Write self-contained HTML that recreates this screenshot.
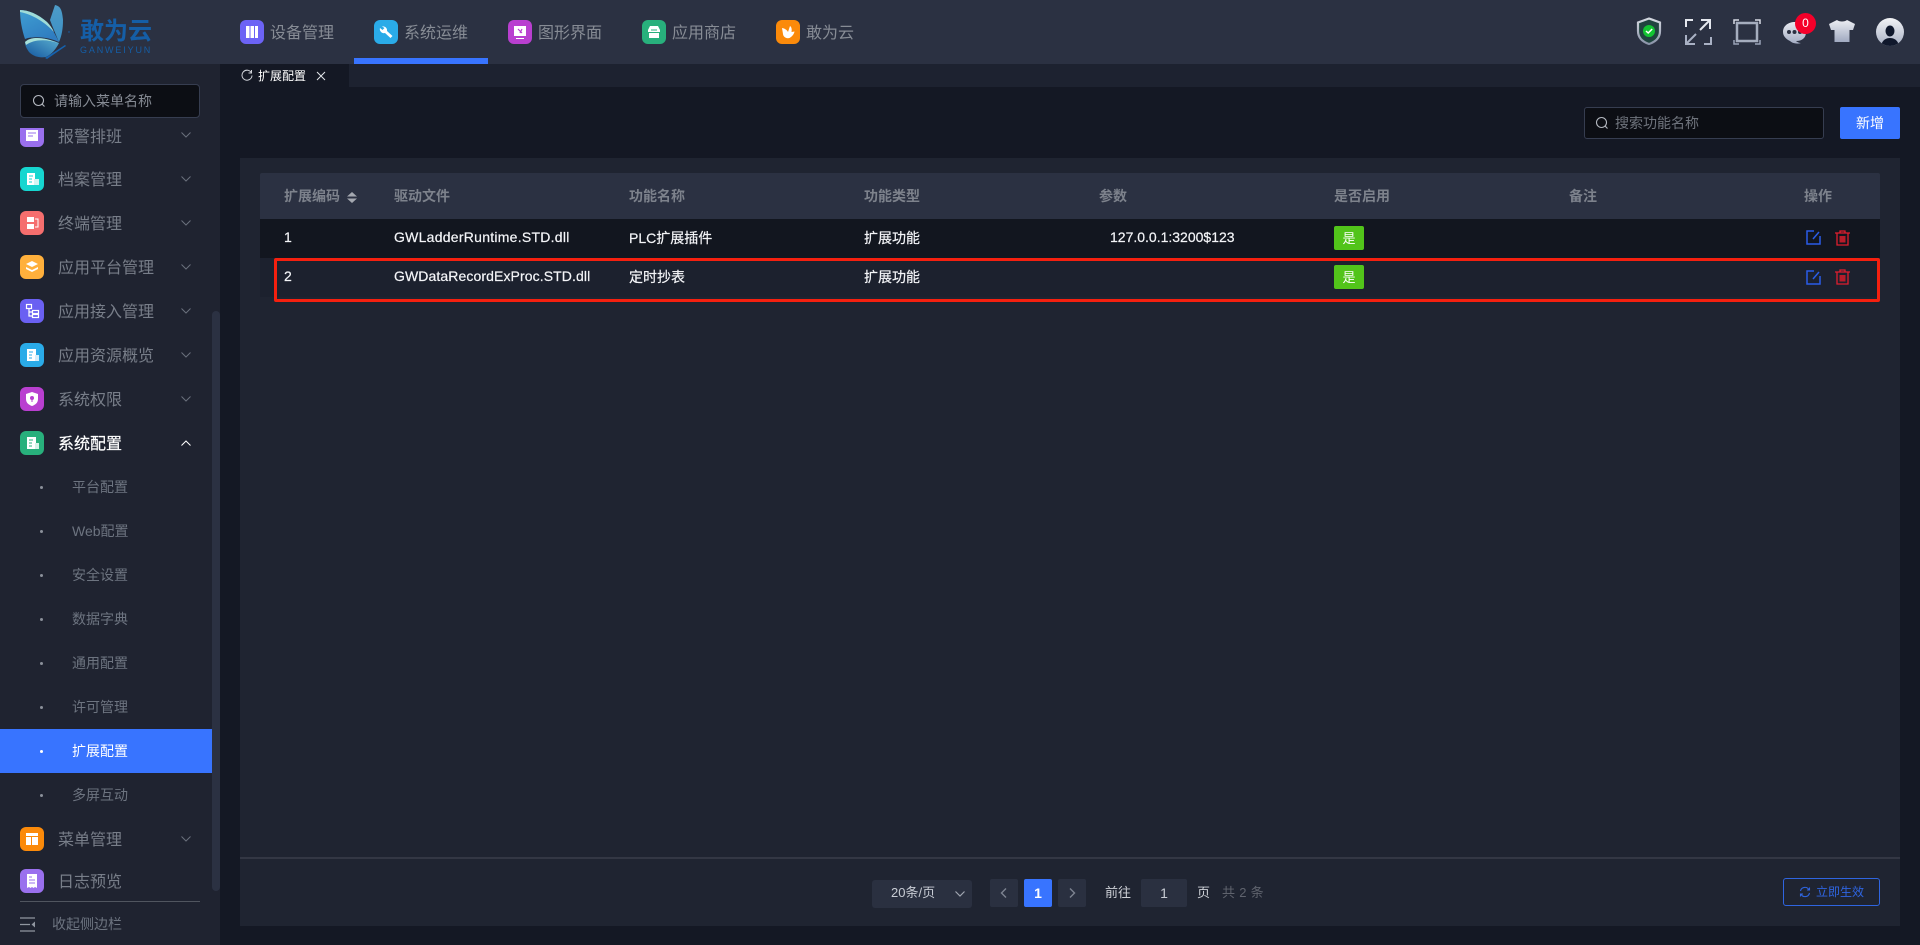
<!DOCTYPE html>
<html lang="zh"><head><meta charset="utf-8"><title>扩展配置</title>
<style>
*{box-sizing:border-box}
html,body{margin:0;padding:0;width:1920px;height:945px;overflow:hidden;background:#141824;font-family:"Liberation Sans","Noto Sans CJK SC",sans-serif}
.a{position:absolute;white-space:nowrap}
.ic{position:absolute;width:24px;height:24px;border-radius:6px}
.ic svg{position:absolute;left:0;top:0;width:24px;height:24px}
.nav{position:absolute;top:22px;height:24px;line-height:24px;font-size:16px;color:#878c95}
.m{position:absolute;left:58px;height:24px;line-height:24px;font-size:16px;color:#787e89;margin-top:2px}
.s{position:absolute;left:72px;height:24px;line-height:24px;font-size:14px;color:#6d7480}
.d{position:absolute;left:40px;width:3px;height:3px;border-radius:50%;background:#8b909a}
.ch{position:absolute;left:181px;width:10px;height:6px}
.th{position:absolute;top:184px;height:24px;line-height:24px;font-size:14px;font-weight:bold;color:#7d828c}
.td{position:absolute;height:24px;line-height:24px;font-size:14px;color:#f4f5f8;-webkit-text-stroke:.2px #f4f5f8}
.tag{position:absolute;left:1334px;width:30px;height:24px;line-height:26px;background:#52c41a;border-radius:2px;color:#fff;font-size:13px;text-align:center}
.pg{position:absolute;top:879px;width:28px;height:28px;background:#2a3040;border-radius:2px}
</style></head><body>
<!-- main panel -->
<div class="a" style="left:220px;top:64px;width:1700px;height:881px;background:#141824"></div>
<div class="a" style="left:0;top:64px;width:220px;height:881px;background:#1f2330"></div>
<div class="a" style="left:220px;top:64px;width:1700px;height:23px;background:#1d2230"></div>
<div class="a" style="left:220px;top:64px;width:129px;height:23px;background:#141824"></div>
<div class="a" style="left:0;top:0;width:1920px;height:64px;background:#2b3142"></div>

<!-- logo -->
<svg class="a" style="left:18px;top:3px" width="54" height="58" viewBox="18 3 54 58">
<defs><linearGradient id="g1" x1="0" y1="0" x2=".6" y2="1"><stop offset="0" stop-color="#3f9ed2"/><stop offset="1" stop-color="#2f7cc0"/></linearGradient>
<linearGradient id="g2" x1="1" y1="0" x2="0" y2="1"><stop offset="0" stop-color="#5bb0d0"/><stop offset="1" stop-color="#14569f"/></linearGradient>
<linearGradient id="g6" x1="0" y1="0" x2="0" y2="1"><stop offset="0" stop-color="#4d9cc8"/><stop offset="1" stop-color="#3c8fc4"/></linearGradient></defs>
<path d="M55 5C60 6 62 9 63 20C63 28 62 35 59 42C56 35 53 28 50 20Z" fill="url(#g6)"/>
<path d="M20 10C28 10 38 14 47 22C52 28 56 36 59 42C50 38 40 36 28 38L25 39C22 30 20 20 20 10Z" fill="url(#g1)"/>
<path d="M20 10C28 10 38 14 47 22C50 25 52 28 54 32C46 23 32 14 20 12Z" fill="#9fdcd8"/>
<path d="M25 42C30 37 42 36 59 43C56 49 52 54 46 57C40 58 34 57 29 52C27 49 25 46 25 42Z" fill="url(#g2)"/>
<path d="M25 42C31 36 44 37 58 43C47 39 34 39 26 45Z" fill="#a8e0d8"/>
<path d="M45 58L65 45L66 46L47 59Z" fill="#1563b0"/><circle cx="69" cy="32" r=".7" fill="#1563b0"/>
</svg>
<div class="a" style="left:80px;top:17px;height:30px;line-height:30px;font-size:24px;font-weight:bold;color:#155ea6">敢为云</div>
<div class="a" style="left:80px;top:46px;height:8px;line-height:8px;font-size:9px;color:#155ea6;letter-spacing:1.85px">GANWEIYUN</div>

<!-- top nav -->
<div class="ic" style="left:240px;top:20px;background:#6c63f5"><svg viewBox="0 0 24 24"><path d="M6 6h3.500v12H6zM10.500 6H14v12h-3.500zM15 6h3v12h-3z" fill="#fff"/></svg></div>
<div class="nav" style="left:270px">设备管理</div>
<div class="ic" style="left:374px;top:20px;background:#2aabe8"><svg viewBox="0 0 24 24"><path d="M8 6.500a4 4 0 0 1 5 4.500l5.500 5-2 2-5.500-5a4 4 0 0 1-5-5l2.500 2 2-2z" fill="#fff"/></svg></div>
<div class="nav" style="left:404px">系统运维</div>
<div class="a" style="left:354px;top:58px;width:134px;height:6px;background:#3874ff"></div>
<div class="ic" style="left:508px;top:20px;background:#b93fd0"><svg viewBox="0 0 24 24"><path d="M6 6h12v10H6z" fill="#fff"/><path d="M8 18h8v1H8z" fill="#fff"/><path d="M10 9l4 4M14 9l-2 4" stroke="#b93fd0" stroke-width="1.200" fill="none"/></svg></div>
<div class="nav" style="left:538px">图形界面</div>
<div class="ic" style="left:642px;top:20px;background:#28b07c"><svg viewBox="0 0 24 24"><path d="M8 6h8l2 4v2H6v-2z" fill="#fff"/><path d="M7 13h10v5H7z" fill="#fff"/><path d="M9 10h6" stroke="#28b07c"/></svg></div>
<div class="nav" style="left:672px">应用商店</div>
<div class="ic" style="left:776px;top:20px;background:#fb8a0a"><svg viewBox="0 0 24 24"><path d="M6 8c3 .5 5 2 6 4l2-6c1.500 1 2 3 1.500 6l3-.5c-.5 3-3 5.500-5 6.500-4 1-6.500-2-6.500-4z" fill="#fff"/></svg></div>
<div class="nav" style="left:806px">敢为云</div>

<!-- header right icons -->
<svg class="a" style="left:1635px;top:16px" width="28" height="30" viewBox="0 0 28 30">
<defs><linearGradient id="g7" x1="0" y1="0" x2="0" y2="1"><stop offset="0" stop-color="#d4d8e0"/><stop offset="1" stop-color="#8a93a8"/></linearGradient></defs>
<path d="M14 2.500L25 6.500V15C25 22 20 26 14 28C8 26 3 22 3 15V6.500Z" fill="#20443f" stroke="url(#g7)" stroke-width="2.200"/>
<circle cx="14" cy="15" r="6" fill="#12c532"/><path d="M11 15l2.200 2 4-4" stroke="#fff" stroke-width="1.500" fill="none"/></svg>
<svg class="a" style="left:1684px;top:18px" width="28" height="28" viewBox="0 0 28 28" fill="none" stroke-width="2">
<path d="M9 2H2V9" stroke="#e4e7ee"/><path d="M27 19V26H20" stroke="#a9b1c4"/>
<path d="M17 2H26V11M26 2L16 12" stroke="#e4e7ee"/><path d="M11 26H2V17M2 26L12 16" stroke="#a9b1c4"/></svg>
<svg class="a" style="left:1732px;top:18px" width="30" height="28" viewBox="0 0 30 28" fill="none">
<rect x="5" y="5" width="20" height="18" stroke="#a5adbe" stroke-width="2.500"/>
<path d="M2 6V2H7M23 2H28V6" stroke="#d8dbe4" stroke-width="1.500"/><path d="M2 22V26H7M23 26H28V22" stroke="#9aa3b8" stroke-width="1.500"/></svg>
<svg class="a" style="left:1782px;top:20px" width="26" height="26" viewBox="0 0 26 26">
<defs><linearGradient id="g3" x1="0" y1="0" x2="0" y2="1"><stop offset="0" stop-color="#e8eaf0"/><stop offset="1" stop-color="#a4adc4"/></linearGradient></defs>
<path d="M13 2C20 2 24 6 24 12C24 18 20 21 14 21C15 22 17 23 19 23C15 24.500 10 23 8 21C4 19 1 16 1 12C1 6 6 2 13 2Z" fill="url(#g3)"/>
<circle cx="7" cy="12" r="2" fill="#2b3142"/><circle cx="12.500" cy="12" r="2" fill="#2b3142"/><circle cx="18" cy="12" r="2" fill="#2b3142"/></svg>
<div class="a" style="left:1795px;top:13px;width:21px;height:21px;border-radius:50%;background:#f5002a;color:#fff;font-size:12px;line-height:21px;text-align:center">0</div>
<svg class="a" style="left:1828px;top:19px" width="28" height="24" viewBox="0 0 28 24">
<defs><linearGradient id="g4" x1="0" y1="0" x2="0" y2="1"><stop offset="0" stop-color="#eceef3"/><stop offset="1" stop-color="#a0a9c0"/></linearGradient></defs>
<path d="M9 1C11 3 17 3 19 1L27 5L25 11H21.500V23H6.500V11H3L1 5Z" fill="url(#g4)"/></svg>
<svg class="a" style="left:1876px;top:18px" width="28" height="28" viewBox="0 0 28 28">
<defs><linearGradient id="g5" x1="0" y1="0" x2="0" y2="1"><stop offset="0" stop-color="#f2f3f6"/><stop offset="1" stop-color="#a8b0c4"/></linearGradient><clipPath id="c5"><circle cx="14" cy="14" r="14"/></clipPath></defs>
<circle cx="14" cy="14" r="14" fill="url(#g5)"/><g clip-path="url(#c5)"><ellipse cx="14" cy="13" rx="4.500" ry="5.500" fill="#10182c"/><path d="M5 28C6 22 10 20 14 20C18 20 22 22 23 28Z" fill="#10182c"/></g></svg>

<!-- tabs -->
<svg class="a" style="left:241px;top:69px" width="12" height="12" viewBox="0 0 12 12" fill="none" stroke="#cfd2d8" stroke-width="1"><path d="M10.500 4A5 5 0 1 0 11 6.500M10.500 1V4H7.500"/></svg>
<div class="a" style="left:258px;top:66px;height:20px;line-height:20px;font-size:12px;color:#fff">扩展配置</div>
<svg class="a" style="left:316px;top:71px" width="10" height="10" viewBox="0 0 10 10" stroke="#e4e6ea" stroke-width="1"><path d="M1 1L9 9M9 1L1 9"/></svg>

<!-- sidebar -->
<div class="a" style="left:20px;top:84px;width:180px;height:34px;background:#0c0e14;border:1px solid #363d50;border-radius:4px"></div>
<svg class="a" style="left:32px;top:94px" width="14" height="14" viewBox="0 0 14 14" fill="none" stroke="#b4b8c0" stroke-width="1.100"><circle cx="6.500" cy="6.500" r="5"/><path d="M10.200 10.200L12.500 12.500"/></svg>
<div class="a" style="left:54px;top:90px;height:22px;line-height:22px;font-size:14px;color:#868b94">请输入菜单名称</div>

<div class="a" style="left:0;top:128px;width:212px;height:773px;overflow:hidden">
<div class="a" style="left:0;top:-128px;width:212px;height:900px">
<div class="ic" style="left:20px;top:123px;background:#9a70ee"><svg viewBox="0 0 24 24"><path d="M6 7h12v11H6z" fill="#fff"/><path d="M8 10h8M8 13h5" stroke="#9a70ee"/></svg></div><div class="m" style="top:124px">报警排班</div>
<div class="ic" style="left:20px;top:167px;background:#16d6d0"><svg viewBox="0 0 24 24"><path d="M7 6h8v12H7z" fill="#fff"/><path d="M14 12h5v6h-5z" fill="#d4f5f3"/><path d="M9 9h4M9 12h3M9 15h3" stroke="#16d6d0"/></svg></div><div class="m" style="top:167px">档案管理</div>
<div class="ic" style="left:20px;top:211px;background:#f56e6e"><svg viewBox="0 0 24 24"><path d="M7 6h7v5H7zM7 13h7v5H7z" fill="#fff"/><path d="M15 8h3v8h-3" stroke="#fff" fill="none"/></svg></div><div class="m" style="top:211px">终端管理</div>
<div class="ic" style="left:20px;top:255px;background:#ffb03c"><svg viewBox="0 0 24 24"><path d="M12 6l6 3-6 3-6-3zM6 12l6 3 6-3v2l-6 3-6-3z" fill="#fff"/></svg></div><div class="m" style="top:255px">应用平台管理</div>
<div class="ic" style="left:20px;top:299px;background:#6a60f2"><svg viewBox="0 0 24 24" fill="none" stroke="#fff" stroke-width="1.200"><rect x="6.500" y="5.500" width="5" height="4"/><rect x="12.500" y="11.500" width="6" height="3"/><rect x="12.500" y="15.500" width="6" height="3"/><path d="M9 10v7h3M9 13h3"/></svg></div><div class="m" style="top:299px">应用接入管理</div>
<div class="ic" style="left:20px;top:343px;background:#2aabe8"><svg viewBox="0 0 24 24"><path d="M7 6h9v12H7z" fill="#fff"/><path d="M15 12h4v6h-4z" fill="#d5eefb"/><path d="M9 9h4M9 12h3M9 15h3" stroke="#2aabe8"/></svg></div><div class="m" style="top:343px">应用资源概览</div>
<div class="ic" style="left:20px;top:387px;background:#b93fd0"><svg viewBox="0 0 24 24"><path d="M12 5l6 2v5c0 4-3 6-6 7-3-1-6-3-6-7V7z" fill="#fff"/><circle cx="12" cy="11" r="2" fill="#b93fd0"/><path d="M12 12v3" stroke="#b93fd0"/></svg></div><div class="m" style="top:387px">系统权限</div>
<div class="ic" style="left:20px;top:431px;background:#28b07c"><svg viewBox="0 0 24 24"><path d="M7 6h9v12H7z" fill="#fff"/><path d="M15 12h4v6h-4z" fill="#d5f2e8"/><path d="M9 9h4M9 12h3M9 15h3" stroke="#28b07c"/></svg></div><div class="m" style="top:431px;color:#fff;-webkit-text-stroke:.2px #fff">系统配置</div>
<div class="d" style="top:486px"></div><div class="s" style="top:475px">平台配置</div>
<div class="d" style="top:530px"></div><div class="s" style="top:519px">Web配置</div>
<div class="d" style="top:574px"></div><div class="s" style="top:563px">安全设置</div>
<div class="d" style="top:618px"></div><div class="s" style="top:607px">数据字典</div>
<div class="d" style="top:662px"></div><div class="s" style="top:651px">通用配置</div>
<div class="d" style="top:706px"></div><div class="s" style="top:695px">许可管理</div>
<div class="a" style="left:0;top:729px;width:212px;height:44px;background:#3874ff"></div>
<div class="d" style="top:750px;background:#fff"></div><div class="s" style="top:739px;color:#fff">扩展配置</div>
<div class="d" style="top:794px"></div><div class="s" style="top:783px">多屏互动</div>
<div class="ic" style="left:20px;top:827px;background:#fb8a0a"><svg viewBox="0 0 24 24"><path d="M6 6h12v3H6zM6 10h5v8H6zM12 10h6v8h-6z" fill="#fff"/></svg></div><div class="m" style="top:827px">菜单管理</div>
<div class="ic" style="left:20px;top:869px;background:#9a70ee"><svg viewBox="0 0 24 24"><path d="M7 5h10v14l-2-1-1.500 1-1.500-1-1.500 1-1.500-1-2 1z" fill="#fff"/><path d="M9 8h3M9 11h6M9 14h6" stroke="#9a70ee"/></svg></div><div class="m" style="top:869px">日志预览</div>
<svg class="ch" style="top:132px" viewBox="0 0 10 6" fill="none" stroke="#6a707c"><path d="M.5.500L5 5L9.500.500"/></svg>
<svg class="ch" style="top:176px" viewBox="0 0 10 6" fill="none" stroke="#6a707c"><path d="M.5.500L5 5L9.500.500"/></svg>
<svg class="ch" style="top:220px" viewBox="0 0 10 6" fill="none" stroke="#6a707c"><path d="M.5.500L5 5L9.500.500"/></svg>
<svg class="ch" style="top:264px" viewBox="0 0 10 6" fill="none" stroke="#6a707c"><path d="M.5.500L5 5L9.500.500"/></svg>
<svg class="ch" style="top:308px" viewBox="0 0 10 6" fill="none" stroke="#6a707c"><path d="M.5.500L5 5L9.500.500"/></svg>
<svg class="ch" style="top:352px" viewBox="0 0 10 6" fill="none" stroke="#6a707c"><path d="M.5.500L5 5L9.500.500"/></svg>
<svg class="ch" style="top:396px" viewBox="0 0 10 6" fill="none" stroke="#6a707c"><path d="M.5.500L5 5L9.500.500"/></svg>
<svg class="ch" style="top:440px" viewBox="0 0 10 6" fill="none" stroke="#fff"><path d="M.5 5.500L5 1L9.500 5.500"/></svg>
<svg class="ch" style="top:836px" viewBox="0 0 10 6" fill="none" stroke="#6a707c"><path d="M.5.500L5 5L9.500.500"/></svg>
</div></div>
<div class="a" style="left:212px;top:311px;width:8px;height:580px;background:#2b3142;border-radius:4px"></div>
<div class="a" style="left:20px;top:901px;width:180px;height:1px;background:#50555f"></div>
<svg class="a" style="left:20px;top:917px" width="16" height="15" viewBox="0 0 16 15" stroke="#9096a0" fill="none" stroke-width="1.200"><path d="M0 1h15M0 7.500h10M0 14h15"/><path d="M15 4.500v6l-3.500-3z" fill="#9096a0" stroke="none"/></svg>
<div class="a" style="left:52px;top:913px;height:22px;line-height:22px;font-size:14px;color:#6d7480">收起侧边栏</div>

<!-- search / add -->
<div class="a" style="left:1584px;top:107px;width:240px;height:32px;background:#0c0e14;border:1px solid #363d50;border-radius:3px"></div>
<svg class="a" style="left:1595px;top:116px" width="14" height="14" viewBox="0 0 14 14" fill="none" stroke="#b4b8c0" stroke-width="1.100"><circle cx="6.500" cy="6.500" r="5"/><path d="M10.200 10.200L12.500 12.500"/></svg>
<div class="a" style="left:1615px;top:112px;height:22px;line-height:22px;font-size:14px;color:#6f747d">搜索功能名称</div>
<div class="a" style="left:1840px;top:107px;width:60px;height:32px;line-height:33px;background:#3874ff;border-radius:2px;color:#fff;font-size:14px;text-align:center">新增</div>

<!-- panel -->
<div class="a" style="left:240px;top:158px;width:1660px;height:768px;background:#1f2431"></div>
<div class="a" style="left:260px;top:173px;width:1620px;height:46px;background:#2b3142;border-radius:2px 2px 0 0"></div>
<div class="a" style="left:260px;top:219px;width:1620px;height:39px;background:#12161f"></div>
<div class="a" style="left:260px;top:258px;width:1620px;height:39px;background:#1c212e"></div>
<div class="th" style="left:284px">扩展编码</div>
<svg class="a" style="left:347px;top:192px" width="10" height="11" viewBox="0 0 10 11" fill="#a4a8b0"><path d="M5 0L10 4.500H0ZM0 6.500H10L5 11Z"/></svg>
<div class="th" style="left:394px">驱动文件</div>
<div class="th" style="left:629px">功能名称</div>
<div class="th" style="left:864px">功能类型</div>
<div class="th" style="left:1099px">参数</div>
<div class="th" style="left:1334px">是否启用</div>
<div class="th" style="left:1569px">备注</div>
<div class="th" style="left:1804px">操作</div>

<div class="td" style="left:284px;top:225px">1</div>
<div class="td" style="left:394px;top:225px;letter-spacing:.26px">GWLadderRuntime.STD.dll</div>
<div class="td" style="left:629px;top:226px">PLC扩展插件</div>
<div class="td" style="left:864px;top:226px">扩展功能</div>
<div class="td" style="left:1110px;top:225px">127.0.0.1:3200$123</div>
<div class="tag" style="top:226px">是</div>
<div class="td" style="left:284px;top:264px">2</div>
<div class="td" style="left:394px;top:264px;letter-spacing:.1px">GWDataRecordExProc.STD.dll</div>
<div class="td" style="left:629px;top:265px">定时抄表</div>
<div class="td" style="left:864px;top:265px">扩展功能</div>
<div class="tag" style="top:265px">是</div>

<svg class="a" style="left:1806px;top:230px" width="15" height="15" viewBox="0 0 15 15" fill="none" stroke="#2a5ce8" stroke-width="1.500"><path d="M8 1H1V14H14V6"/><path d="M13 2L7 9"/></svg>
<svg class="a" style="left:1835px;top:230px" width="15" height="16" viewBox="0 0 15 16" fill="none" stroke="#e01e2e" stroke-width="1.300"><path d="M0 3H15M5 3V1H10V3M2 3V15H13V3"/><path d="M4.500 6H10.500V12.500H4.500Z" fill="#b81c2a" stroke="none"/></svg>
<svg class="a" style="left:1806px;top:270px" width="15" height="15" viewBox="0 0 15 15" fill="none" stroke="#2a5ce8" stroke-width="1.500"><path d="M8 1H1V14H14V6"/><path d="M13 2L7 9"/></svg>
<svg class="a" style="left:1835px;top:269px" width="15" height="16" viewBox="0 0 15 16" fill="none" stroke="#e01e2e" stroke-width="1.300"><path d="M0 3H15M5 3V1H10V3M2 3V15H13V3"/><path d="M4.500 6H10.500V12.500H4.500Z" fill="#b81c2a" stroke="none"/></svg>

<!-- red highlight -->
<div class="a" style="left:274px;top:258px;width:1606px;height:44px;border:3px solid #f5200f;border-radius:2px"></div>

<!-- pagination -->
<div class="a" style="left:240px;top:857px;width:1660px;height:2px;background:#333744"></div>
<div class="a" style="left:872px;top:880px;width:100px;height:28px;background:#2a3040;border-radius:3px"></div>
<div class="a" style="left:891px;top:879px;height:28px;line-height:28px;font-size:13px;color:#c8ccd4">20条/页</div>
<svg class="a" style="left:955px;top:891px" width="10" height="6" viewBox="0 0 10 6" fill="none" stroke="#a0a5b0" stroke-width="1.200"><path d="M.5.500L5 5L9.500.500"/></svg>
<div class="pg" style="left:990px"></div>
<svg class="a" style="left:1000px;top:888px" width="7" height="10" viewBox="0 0 7 10" fill="none" stroke="#7d8390" stroke-width="1.400"><path d="M6 .5L1.500 5L6 9.500"/></svg>
<div class="pg" style="left:1024px;background:#3874ff;color:#fff;font-size:14px;font-weight:bold;text-align:center;line-height:28px">1</div>
<div class="pg" style="left:1058px"></div>
<svg class="a" style="left:1069px;top:888px" width="7" height="10" viewBox="0 0 7 10" fill="none" stroke="#7d8390" stroke-width="1.400"><path d="M1 .5L5.500 5L1 9.500"/></svg>
<div class="a" style="left:1105px;top:879px;height:28px;line-height:28px;font-size:13px;color:#cdd0d6">前往</div>
<div class="pg" style="left:1141px;width:46px;color:#c8ccd4;font-size:14px;text-align:center;line-height:28px">1</div>
<div class="a" style="left:1197px;top:879px;height:28px;line-height:28px;font-size:13px;color:#cdd0d6">页</div>
<div class="a" style="left:1222px;top:879px;height:28px;line-height:28px;font-size:13px;letter-spacing:.3px;color:#5f636d">共 2 条</div>
<div class="a" style="left:1783px;top:878px;width:97px;height:28px;border:1px solid #2f65e0;border-radius:3px"></div>
<svg class="a" style="left:1799px;top:886px" width="12" height="12" viewBox="0 0 12 12" fill="none" stroke="#2f65e0" stroke-width="1.100"><path d="M1.500 5A4.500 4.500 0 0 1 10 4M10.500 7A4.500 4.500 0 0 1 2 8M10.500 1.500V4H8M1.500 10.500V8H4"/></svg>
<div class="a" style="left:1816px;top:878px;height:28px;line-height:28px;font-size:12px;color:#2f65e0">立即生效</div>
</body></html>
